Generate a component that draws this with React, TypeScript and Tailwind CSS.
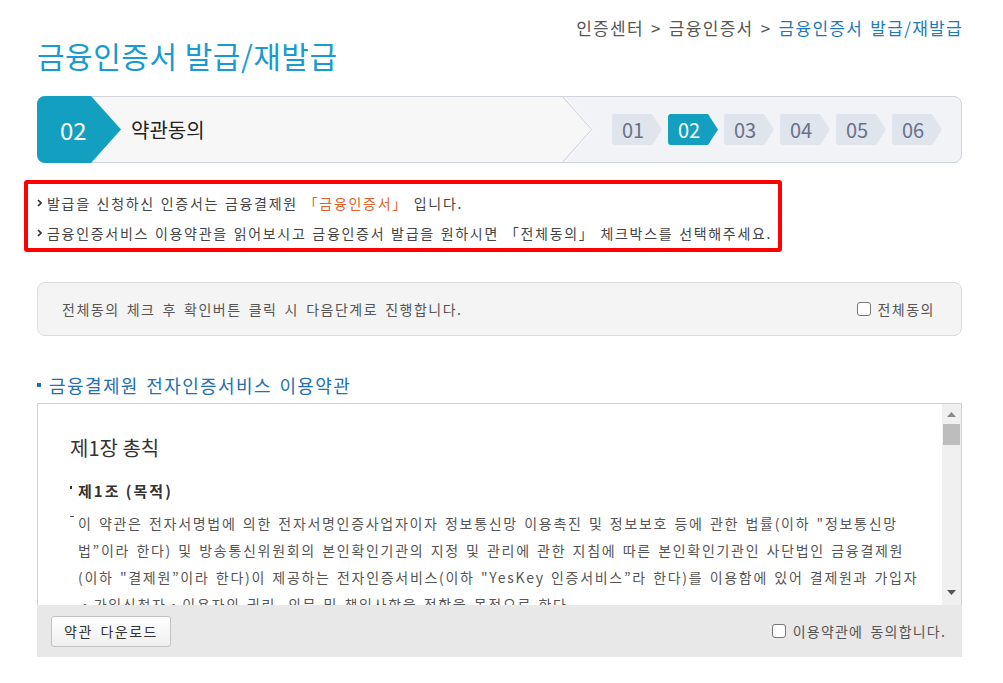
import React from "react";

function Bullet() {
  return (
    <svg width="5" height="8" viewBox="0 0 5 8" className="shrink-0">
      <path d="M1 1 L4 4 L1 7" fill="none" stroke="#333" strokeWidth="1.7" />
    </svg>
  );
}

function Checkbox() {
  return (
    <span className="inline-block w-[14px] h-[14px] rounded-[3px] border border-[#767676] bg-white shrink-0" />
  );
}

const steps = ["01", "02", "03", "04", "05", "06"];

export default function App() {
  return (
    <div className="w-[1003px] h-[683px] bg-white font-['Noto_Sans_CJK_KR',sans-serif] overflow-hidden">
      <div className="ml-[37px] w-[925px] flex flex-col">
        {/* breadcrumb */}
        <div className="mt-[15px] h-[26px] flex justify-end items-center text-[17px] leading-[26px] text-[#555] whitespace-nowrap -mr-px tracking-[1.3px] [word-spacing:2px]">
          <span>인증센터 &gt; 금융인증서 &gt;&nbsp;</span>
          <span className="text-[#1d79bd]">금융인증서 발급/재발급</span>
        </div>
        {/* title */}
        <h1 className="-mt-[4px] h-[36px] text-[30px] leading-[36px] tracking-[0.5px] text-[#199bd0] font-normal whitespace-nowrap">
          금융인증서 발급/재발급
        </h1>

        {/* step bar */}
        <div className="mt-[23px] h-[67px] flex rounded-[8px] border border-[#cfd4dc] bg-[#f1f3f6]">
          <div className="w-[525px] flex items-center bg-[#f7f7f7] rounded-l-[8px]">
            <div className="-ml-px -my-px h-[67px] w-[84px] shrink-0 flex items-center pl-[23px] rounded-l-[8px] bg-[#13a0c0] [clip-path:polygon(0_0,calc(100%_-_30px)_0,100%_50%,calc(100%_-_30px)_100%,0_100%)]">
              <span className="text-[24px] leading-[30px] text-white">02</span>
            </div>
            <span className="ml-[10px] text-[20px] leading-[28px] text-[#222]">약관동의</span>
          </div>
          <svg width="30" height="65" viewBox="0 0 30 65" className="shrink-0">
            <polygon points="0,0 29,32.5 0,65" fill="#f7f7f7" />
            <polyline points="0,0 29,32.5 0,65" fill="none" stroke="#d6dae1" strokeWidth="1.2" />
            <polyline points="1.5,0 30,32.5 1.5,65" fill="none" stroke="#ffffff" strokeWidth="1" />
          </svg>
          <div className="flex items-center gap-[6px] pl-[19px]">
            {steps.map((s) => (
              <div
                key={s}
                className={
                  s === "02"
                    ? "h-[31px] w-[50px] flex items-center pl-[10px] rounded-l-[3px] bg-[#13a0c0] text-white [clip-path:polygon(0_0,calc(100%_-_10px)_0,100%_50%,calc(100%_-_10px)_100%,0_100%)]"
                    : "h-[31px] w-[50px] flex items-center pl-[10px] rounded-l-[3px] bg-[#e0e4ec] text-[#67718a] [clip-path:polygon(0_0,calc(100%_-_10px)_0,100%_50%,calc(100%_-_10px)_100%,0_100%)]"
                }
              >
                <span className="text-[20px] leading-[24px]">{s}</span>
              </div>
            ))}
          </div>
        </div>

        {/* red notice box */}
        <div className="mt-[17px] -ml-[13px] w-[758px] h-[72px] border-[4px] border-[#ff0000] rounded-[3px] pl-[9px] pt-[8px] flex flex-col text-[14px] text-[#444] tracking-[1.7px] [word-spacing:1px] whitespace-nowrap">
          <div className="h-[22px] flex items-center gap-[5px] leading-[22px]">
            <Bullet />
            <span>
              발급을 신청하신 인증서는 금융결제원 <span className="text-[#e2602a]">「금융인증서」</span> 입니다.
            </span>
          </div>
          <div className="mt-[8px] h-[22px] flex items-center gap-[5px] leading-[22px]">
            <Bullet />
            <span>금융인증서비스 이용약관을 읽어보시고 금융인증서 발급을 원하시면 「전체동의」 체크박스를 선택해주세요.</span>
          </div>
        </div>

        {/* agree all box */}
        <div className="mt-[30px] h-[54px] rounded-[8px] border border-[#dcdcdc] bg-[#f4f4f4] flex items-center justify-between pl-[24px] pr-[26px] text-[14px] text-[#555] tracking-[1.5px] [word-spacing:2.5px] whitespace-nowrap">
          <span>전체동의 체크 후 확인버튼 클릭 시 다음단계로 진행합니다.</span>
          <label className="flex items-center gap-[6px]">
            <Checkbox />
            <span>전체동의</span>
          </label>
        </div>

        {/* section heading */}
        <div className="mt-[36px] h-[26px] flex items-center gap-[8px]">
          <span className="w-[4px] h-[4px] bg-[#1f6fb2] shrink-0" />
          <span className="text-[18px] leading-[26px] text-[#2270b3] whitespace-nowrap tracking-[1.4px] [word-spacing:2px]">금융결제원 전자인증서비스 이용약관</span>
        </div>

        {/* terms box */}
        <div className="mt-[5px] h-[202px] flex border border-b-0 border-[#ccd2d8]">
          <div className="flex-1 overflow-hidden pl-[32px] pt-[30px] text-[#555]">
            <div className="h-[28px] text-[20px] leading-[28px] text-[#333] whitespace-nowrap">제1장 총칙</div>
            <div className="mt-[18px] h-[22px] flex items-start">
              <span className="mt-[6px] w-[2px] h-[3px] bg-[#333] shrink-0" />
              <span className="ml-[6px] text-[15px] leading-[22px] font-bold text-[#333] tracking-[2px] whitespace-nowrap">제1조 (목적)</span>
            </div>
            <div className="mt-[8px] flex">
              <span className="mt-[6px] w-[4px] h-[1px] bg-[#555] shrink-0" />
              <div className="ml-[4px] text-[14px] leading-[27px] tracking-[1.7px] [word-spacing:1.5px] whitespace-nowrap">
                <div>이 약관은 전자서명법에 의한 전자서명인증사업자이자 정보통신망 이용촉진 및 정보보호 등에 관한 법률(이하 "정보통신망</div>
                <div>법”이라 한다) 및 방송통신위원회의 본인확인기관의 지정 및 관리에 관한 지침에 따른 본인확인기관인 사단법인 금융결제원</div>
                <div>(이하 "결제원”이라 한다)이 제공하는 전자인증서비스(이하 "YesKey 인증서비스”라 한다)를 이용함에 있어 결제원과 가입자</div>
                <div>・가입신청자・이용자의 권리, 의무 및 책임사항을 정함을 목적으로 한다.</div>
              </div>
            </div>
          </div>
          {/* scrollbar */}
          <div className="w-[19px] shrink-0 bg-[#f0f0f0] flex flex-col items-center">
            <svg width="9" height="5" viewBox="0 0 9 5" className="mt-[8px]">
              <polygon points="0,5 4.5,0 9,5" fill="#8a8a8a" />
            </svg>
            <div className="mt-[7px] w-[17px] h-[21px] bg-[#bdbdbd]" />
            <div className="flex-1" />
            <svg width="9" height="5" viewBox="0 0 9 5" className="mb-[10px]">
              <polygon points="0,0 9,0 4.5,5" fill="#555" />
            </svg>
          </div>
        </div>

        {/* bottom bar */}
        <div className="h-[52px] bg-[#e8e8e8] flex items-center justify-between pl-[14px] pr-[16px] text-[14px] tracking-[1.2px] [word-spacing:3px] whitespace-nowrap">
          <button className="h-[31px] w-[120px] rounded-[3px] border border-[#c2c2c2] bg-gradient-to-b from-white to-[#efefef] text-[#333] text-[14px] tracking-[1.5px] [word-spacing:3px]">
            약관 다운로드
          </button>
          <label className="flex items-center gap-[7px] text-[#555]">
            <Checkbox />
            <span>이용약관에 동의합니다.</span>
          </label>
        </div>
      </div>
    </div>
  );
}
